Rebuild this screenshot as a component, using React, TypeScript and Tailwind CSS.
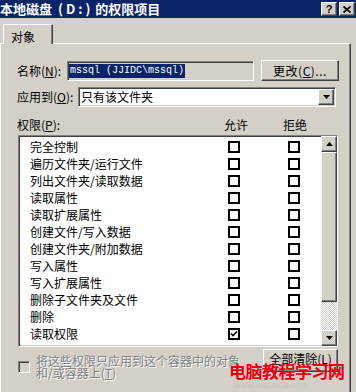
const F = "font-['Noto_Sans_CJK_SC','Liberation_Sans',sans-serif]";

const raised =
  "border border-t-white border-l-white border-r-[#404040] border-b-[#404040] shadow-[inset_-1px_-1px_0_#808080,inset_1px_1px_0_#d4d0c8]";
const sunken =
  "border border-t-[#808080] border-l-[#808080] border-r-white border-b-white shadow-[inset_1px_1px_0_#404040,inset_-1px_-1px_0_#d4d0c8]";

const perms: [string, boolean][] = [
  ["完全控制", false],
  ["遍历文件夹/运行文件", false],
  ["列出文件夹/读取数据", false],
  ["读取属性", false],
  ["读取扩展属性", false],
  ["创建文件/写入数据", false],
  ["创建文件夹/附加数据", false],
  ["写入属性", false],
  ["写入扩展属性", false],
  ["删除子文件夹及文件", false],
  ["删除", false],
  ["读取权限", true],
];

const Box = ({ checked = false }: { checked?: boolean }) => (
  <span className="w-[12px] h-[12px] border-2 border-black bg-white flex items-center justify-center shrink-0">
    {checked && (
      <svg width="8" height="8" viewBox="0 0 8 8">
        <path d="M1 3.5 L3 5.5 L7 1.5" stroke="#000" strokeWidth="1.6" fill="none" />
      </svg>
    )}
  </span>
);

const Arrow = ({ up = false }: { up?: boolean }) => (
  <svg width="7" height="4" viewBox="0 0 7 4">
    <path d={up ? "M3.5 0 L7 4 L0 4 Z" : "M0 0 L7 0 L3.5 4 Z"} fill="#000" />
  </svg>
);

export default function App() {
  return (
    <div className={`relative w-[356px] h-[392px] overflow-hidden bg-[#d4d0c8] text-[12px] text-black ${F}`}>
      {/* title bar */}
      <div className="h-[18px] bg-[#0a246a] flex items-center justify-between">
        <span className="flex text-white font-bold text-[13px] leading-[18px] whitespace-pre">
          <span>本地磁盘</span>
          <span className="ml-[6px] tracking-[3px]">(D:)</span>
          <span className="ml-[2px]">的权限项目</span>
        </span>
        <div className="flex gap-[2px] mr-[1px]">
          <span className={`w-[16px] h-[14px] bg-[#d4d0c8] ${raised} flex items-center justify-center text-[11px] font-bold leading-none font-['Liberation_Sans',sans-serif]`}>
            ?
          </span>
          <span className={`w-[16px] h-[14px] bg-[#d4d0c8] ${raised} flex items-center justify-center`}>
            <svg width="8" height="7" viewBox="0 0 8 7">
              <path d="M0.5 0.5 L7.5 6.5 M7.5 0.5 L0.5 6.5" stroke="#000" strokeWidth="1.7" />
            </svg>
          </span>
        </div>
      </div>

      {/* tabs */}
      <div className="pt-[6px] mr-[5px]">
        <div className="relative z-10 ml-[3px] w-[50px] h-[20px] -mb-px bg-[#d4d0c8] border-t border-l border-white border-r border-r-[#404040] rounded-tl-[2px] shadow-[inset_-1px_0_0_#808080] pl-[7px] pt-[2px] leading-[20px]">
          对象
        </div>
        <div className="h-[360px] border-t border-l border-white border-r border-r-[#404040] shadow-[inset_-1px_0_0_#808080] pl-[16px]">
          {/* name */}
          <div className="flex items-center mt-[16px] h-[21px]">
            <span className="w-[50px]">
              名称(<u>N</u>):
            </span>
            <div className={`w-[187px] h-[20px] ${sunken} flex items-center pl-[1px]`}>
              <span className="bg-[#0a246a] text-white font-['Liberation_Mono',monospace] text-[10px] leading-[14px] px-[1px] whitespace-pre">
                mssql (JJIDC\mssql)
              </span>
            </div>
            <button className={`ml-[7px] w-[78px] h-[21px] ${raised} bg-[#d4d0c8] text-[12px] leading-none tracking-[0.5px]`}>
              更改(<u>C</u>)...
            </button>
          </div>

          {/* apply to */}
          <div className="flex items-center mt-[6px] h-[20px]">
            <span className="w-[61px]">
              应用到(<u>O</u>):
            </span>
            <div className={`w-[258px] h-[20px] ${sunken} bg-white flex items-center justify-between pl-[2px] pr-[1px]`}>
              <span>只有该文件夹</span>
              <span className={`w-[16px] h-[16px] bg-[#d4d0c8] ${raised} flex items-center justify-center`}>
                <Arrow />
              </span>
            </div>
          </div>

          {/* header */}
          <div className="flex items-center mt-[12px] h-[12px] leading-[12px]">
            <span className="w-[207px]">
              权限(<u>P</u>):
            </span>
            <span className="w-[59px]">允许</span>
            <span>拒绝</span>
          </div>

          {/* list */}
          <div className={`mt-[4px] ml-[1px] w-[320px] h-[212px] bg-white ${sunken} flex`}>
            <div className="flex-1 pt-[2px]">
              {perms.map(([label, allow]) => (
                <div key={label} className="h-[17px] flex items-center pl-[11px]">
                  <span className="w-[198px] whitespace-nowrap">{label}</span>
                  <Box checked={allow} />
                  <span className="w-[48px]" />
                  <Box />
                </div>
              ))}
            </div>
            <div className="w-[16px] flex flex-col">
              <span className={`h-[16px] bg-[#d4d0c8] ${raised} flex items-center justify-center`}>
                <Arrow up />
              </span>
              <span className={`h-[150px] bg-[#d4d0c8] ${raised}`} />
              <span className="flex-1 bg-[repeating-conic-gradient(#ffffff_0_25%,#d4d0c8_0_50%)] bg-[length:2px_2px]" />
              <span className={`h-[16px] bg-[#d4d0c8] ${raised} flex items-center justify-center`}>
                <Arrow />
              </span>
            </div>
          </div>

          {/* bottom */}
          <div className="flex items-start mt-[2px]">
            <div className="flex items-center mt-[6px] ml-[1px]">
              <span className={`w-[12px] h-[12px] bg-[#d4d0c8] ${sunken}`} />
              <span className="ml-[6px] w-[220px] leading-[12px] text-[#808080] [text-shadow:1px_1px_0_#fff]">
                将这些权限只应用到这个容器中的对象
                <br />
                和/或容器上(<u>T</u>)
              </span>
            </div>
            <button className={`ml-[7px] w-[75px] h-[23px] ${raised} bg-[#d4d0c8] text-[12px] leading-none pb-[4px]`}>
              全部清除(<u>L</u>)
            </button>
          </div>
        </div>
      </div>

      {/* watermark */}
      <div className="absolute left-[229px] top-[361px] text-[#e60012] font-bold text-[17px] leading-[19px] tracking-[-0.5px] whitespace-nowrap">
        电脑教程学习网
      </div>
      <div className="absolute left-[234px] top-[381px] text-[#c8c4bc] text-[9px] leading-[9px] font-['Liberation_Sans',sans-serif] whitespace-nowrap">
        www.xiazaiba.com
      </div>
    </div>
  );
}
